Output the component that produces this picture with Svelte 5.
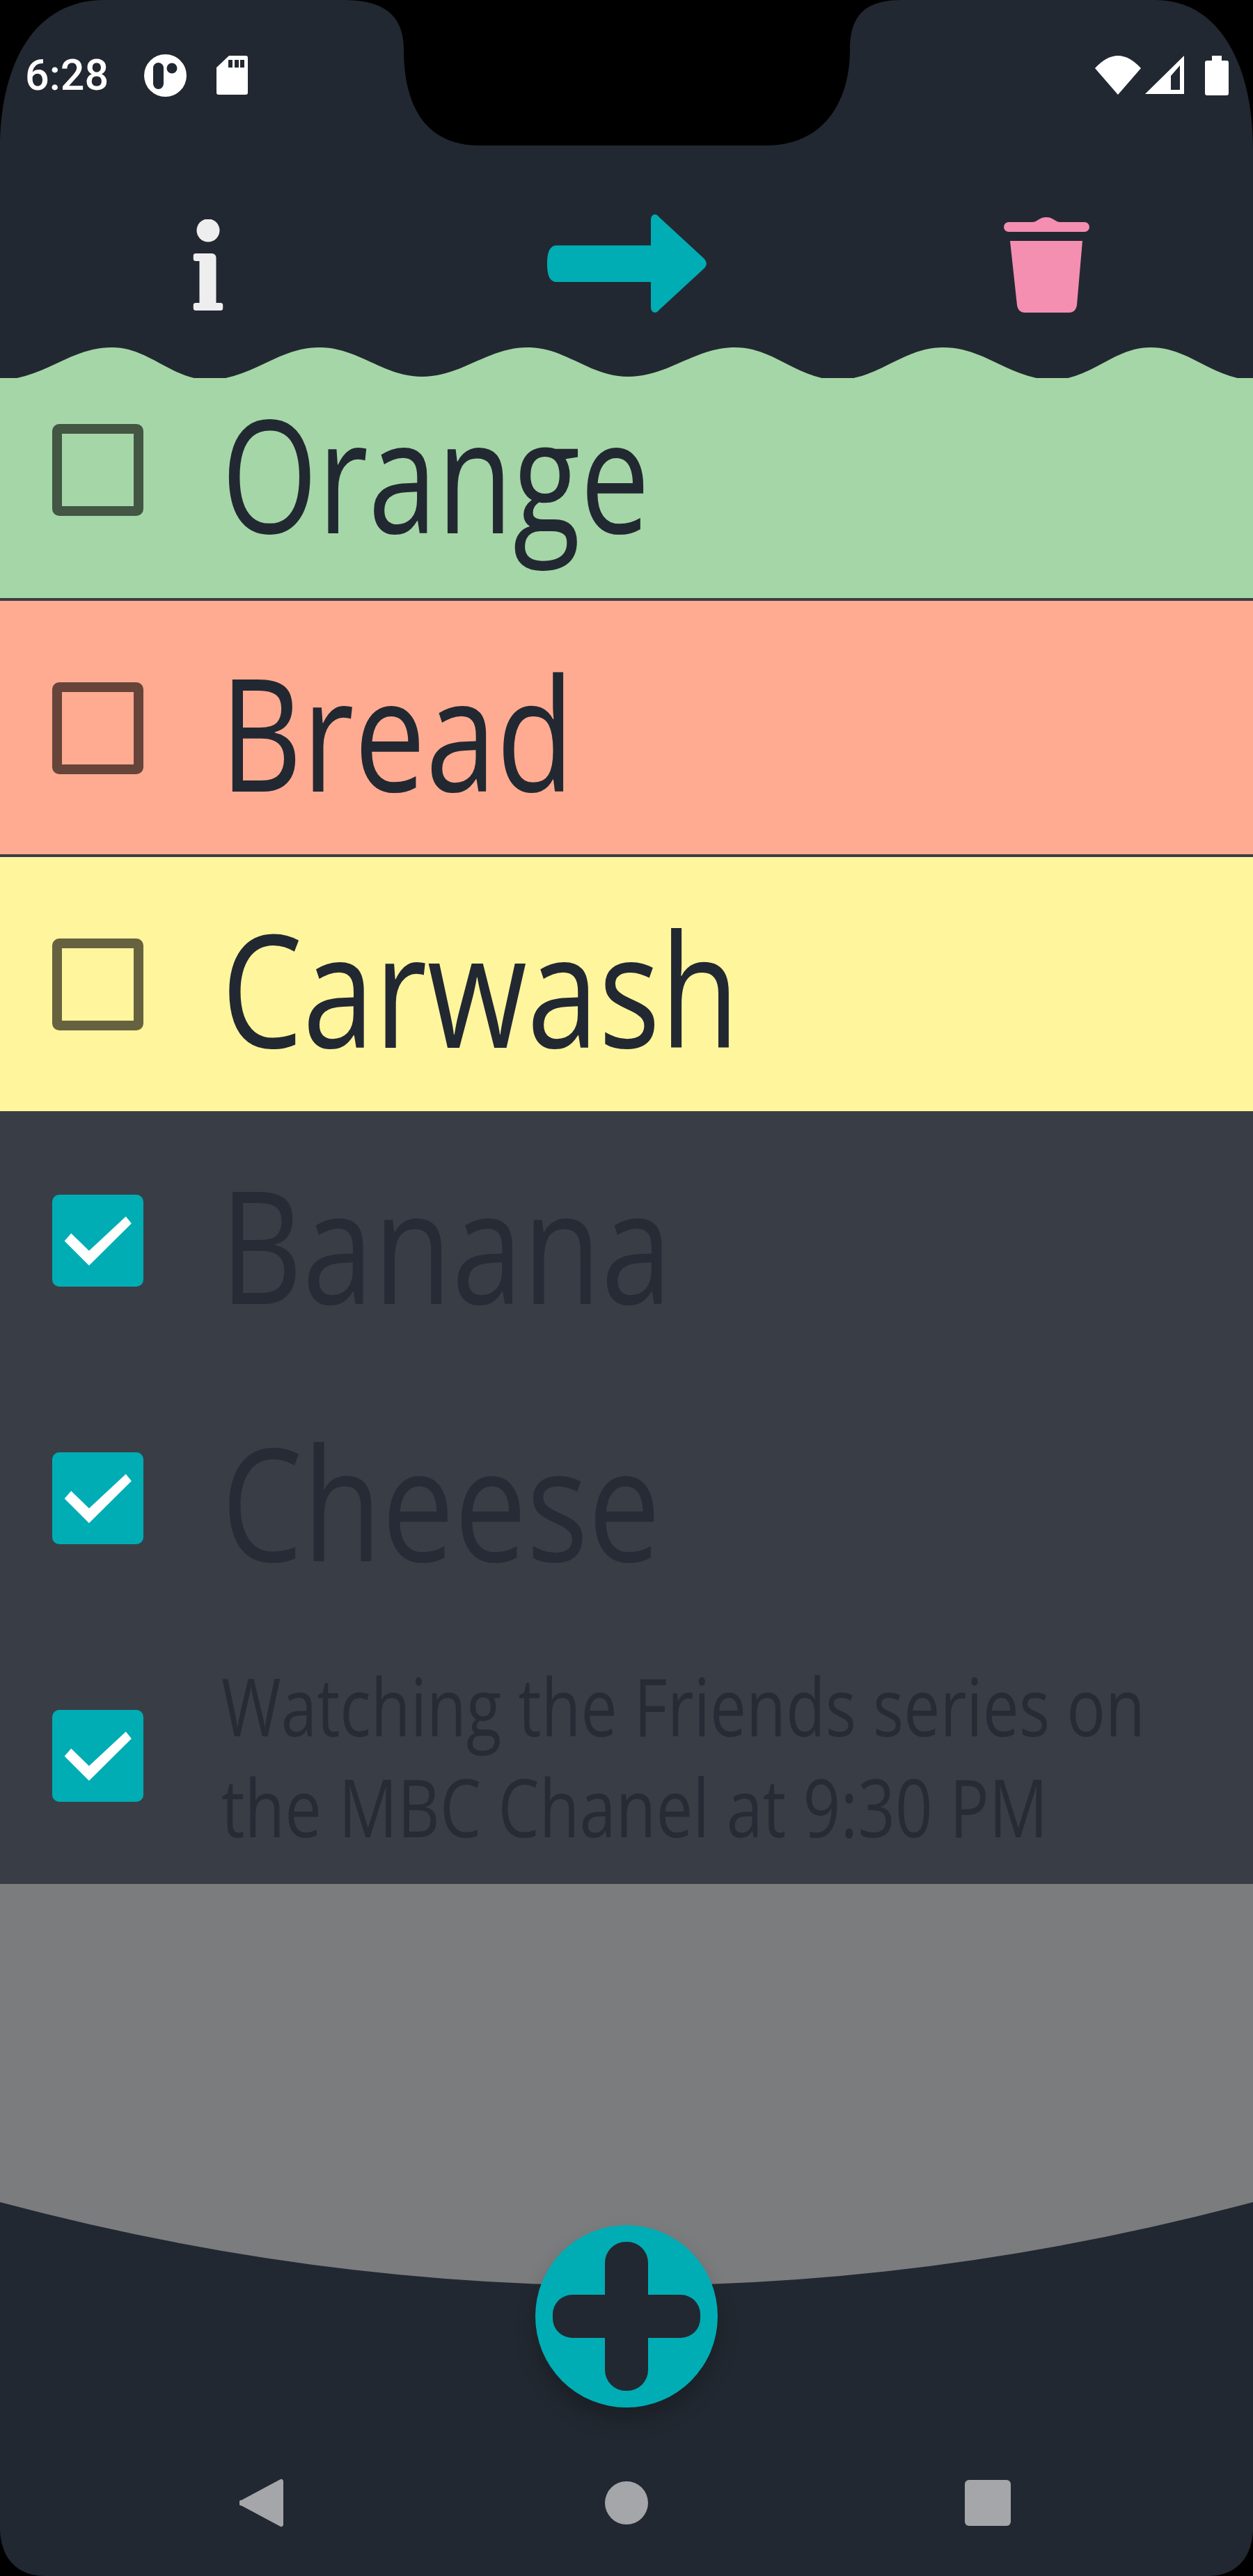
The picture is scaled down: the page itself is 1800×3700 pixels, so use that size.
<script>
  // sx and dx fit the fallback font to the measured width of each line
  const items = [
    { lines: [{ text: 'Orange', sx: 0.787 }], color: 'green', done: false, dx: 0 },
    { lines: [{ text: 'Bread', sx: 0.809 }], color: 'coral', done: false, line: true, dx: -2 },
    { lines: [{ text: 'Carwash', sx: 0.82 }], color: 'yellow', done: false, line: true, dx: 0 },
    { lines: [{ text: 'Banana', sx: 0.812 }], done: true, dx: -2 },
    { lines: [{ text: 'Cheese', sx: 0.82 }], done: true, dx: 0 },
    {
      lines: [
        { text: 'Watching the Friends series on', sx: 0.8 },
        { text: 'the MBC Chanel at 9:30 PM', sx: 0.811 },
      ],
      done: true,
      small: true,
      dx: 0,
    },
  ]

  // wave extremes along the bottom of the header: [x, y]
  const waveStops = [
    [0, 545.5], [161, 499], [300, 545.5], [459, 499], [606, 541], [758, 499], [902, 541],
    [1056, 499], [1203, 545.5], [1355, 499], [1513, 545.5], [1653, 499], [1800, 545.5],
  ]

  const buildWave = () => {
    let d = `M0 490 L${waveStops[0][0]} ${waveStops[0][1]}`
    for (let i = 1; i < waveStops.length; i++) {
      const [x0, y0] = waveStops[i - 1]
      const [x1, y1] = waveStops[i]
      const k = (x1 - x0) * 0.38
      d += ` C${x0 + k} ${y0} ${x1 - k} ${y1} ${x1} ${y1}`
    }
    return d + ' L1800 490 Z'
  }

  const wavePath = buildWave()
</script>

<div class="screen">
  <header class="header">
    <div class="status">
      <div class="status__left">
        <span class="time">6:28</span>
        <svg class="ic-circle" viewBox="205 77 61 61" aria-hidden="true">
          <circle cx="235.5" cy="107.5" r="30.5" fill="#fff" />
          <rect x="218" y="89" width="15" height="38" rx="7.5" fill="#222831" />
          <circle cx="245" cy="97" r="7.5" fill="#222831" />
        </svg>
        <svg class="ic-sd" viewBox="309 80 45 56" aria-hidden="true">
          <path d="M327 80H351a3 3 0 0 1 3 3V133a3 3 0 0 1-3 3H312a3 3 0 0 1-3-3V97Z" fill="#fff" />
          <path d="M326 86h6v11h-6zM335 86h6v11h-6zM343 86h6v11h-6z" fill="#222831" />
        </svg>
      </div>
      <div class="status__right">
        <svg class="ic-wifi" viewBox="1573 79 66 56" aria-hidden="true">
          <path d="M1606 135L1573 97Q1606 61 1639 97Z" fill="#fff" />
        </svg>
        <svg class="ic-signal" viewBox="1645 80 56 56" aria-hidden="true">
          <path d="M1645 135L1701 80V135Z" fill="#fff" />
          <path d="M1682 109L1695 94V129H1682Z" fill="#222831" />
        </svg>
        <svg class="ic-battery" viewBox="1731 79 34 57" aria-hidden="true">
          <path d="M1741 79H1755V86H1762a3 3 0 0 1 3 3V133a3 3 0 0 1-3 3H1734a3 3 0 0 1-3-3V89a3 3 0 0 1 3-3H1741Z" fill="#fff" />
        </svg>
      </div>
    </div>

    <div class="toolbar">
      <div class="toolbar__cell">
        <svg class="ic-info" viewBox="277 315 43 131" aria-label="Info">
          <ellipse cx="298.5" cy="331" rx="16.5" ry="16.5" />
          <path d="M281 364H304a6 6 0 0 1 6 6V435H316a4 4 0 0 1 4 4V442a4 4 0 0 1-4 4H281a4 4 0 0 1-4-4V439a4 4 0 0 1 4-4H286V375H281a4 4 0 0 1-4-4V368a4 4 0 0 1 4-4Z" />
        </svg>
      </div>
      <div class="toolbar__cell">
        <svg class="ic-arrow" viewBox="785 308 229 141" aria-label="Next">
          <path d="M799 352.5H934V316C934 308 941 305 946 312L1010 371C1015 376 1015 381 1010 386L946 445C941 452 934 449 934 441V405H799C790 405 785 398 785 379C785 360 790 352.5 799 352.5Z" />
        </svg>
      </div>
      <div class="toolbar__cell">
        <svg class="ic-trash" viewBox="1442 312 123 137" aria-label="Delete">
          <path d="M1449 319H1483C1490 319 1493 312 1503 312C1513 312 1516 319 1523 319H1558a7 7 0 0 1 7 7a7 7 0 0 1-7 7H1449a7 7 0 0 1-7-7a7 7 0 0 1 7-7Z" />
          <path d="M1451 346H1555L1547 438C1546 445 1542 449 1536 449H1472C1466 449 1462 445 1461 438Z" />
        </svg>
      </div>
    </div>
  </header>

  <ul class="list">
    {#each items as item, i}
      <li class="row {item.color ?? ''}" class:row--done={item.done} class:row--line={item.line}>
        {#if i === 0}
          <svg class="wave" viewBox="0 490 1800 53" preserveAspectRatio="none" aria-hidden="true">
            <path d={wavePath} fill="#222831" />
          </svg>
        {/if}
        {#if item.done}
          <span class="box box--on">
            <svg viewBox="0 0 130 131" aria-hidden="true">
              <path d="M17.5 66L52.5 101L113 41L105 31L52.5 80L27 55Z" fill="#fff" />
            </svg>
          </span>
        {:else}
          <span class="box"></span>
        {/if}
        <span class="label" class:label--small={item.small}>
          {#each item.lines as line}
            <span class="label__line" style="transform: translateX({item.dx}px) scaleX({line.sx})">{line.text}</span>
          {/each}
        </span>
      </li>
    {/each}
  </ul>

  <footer class="tail">
    <svg class="tail__arc" viewBox="0 0 1800 540" aria-hidden="true">
      <path d="M0 3Q900 243 1800 3V540H0Z" fill="#222831" />
    </svg>
    <button class="fab" type="button" aria-label="Add">
      <svg viewBox="0 0 212 214" aria-hidden="true">
        <rect x="75" y="0" width="62" height="214" rx="30" />
        <rect x="0" y="76" width="212" height="62" rx="28" />
      </svg>
    </button>
    <nav class="nav">
      <svg class="nav__back" viewBox="344 3560 63 70" aria-hidden="true">
        <path d="M403 3561a3 3 0 0 1 4 3V3626a3 3 0 0 1-4 3L347 3599a4 4 0 0 1 0-8Z" />
      </svg>
      <span class="nav__home"></span>
      <span class="nav__recent"></span>
    </nav>
  </footer>

  <svg class="mask" viewBox="0 0 1800 3700" aria-hidden="true">
    <path d="M0 0H150C50 0 0 90 0 215Z" />
    <path d="M1800 0H1660C1750 0 1800 90 1800 215Z" />
    <path d="M494 0C555 0 580 25 580 71C580 150 610 209 689 209H1101C1180 209 1221 150 1221 71C1221 25 1240 0 1295 0Z" />
    <path d="M0 3635C2 3675 25 3700 65 3700H0Z" />
    <path d="M1800 3635C1798 3675 1775 3700 1735 3700H1800Z" />
  </svg>
</div>

<style>
  :global(body) {
    margin: 0;
    background: #222831;
  }

  .screen {
    position: relative;
    display: flex;
    flex-direction: column;
    width: 1800px;
    height: 3700px;
    overflow: hidden;
    background: #222831;
    font-family: 'Open Sans', sans-serif;
  }

  .header {
    height: 490px;
    flex-shrink: 0;
  }

  .status {
    display: flex;
    align-items: center;
    justify-content: space-between;
    height: 216px;
    padding: 0 35px 0 36px;
  }

  .status__left,
  .status__right {
    display: flex;
    align-items: center;
  }

  .time {
    font-family: Roboto, sans-serif;
    font-size: 61px;
    font-weight: 500;
    line-height: 60px;
    color: #fff;
  }

  .ic-circle {
    width: 61px;
    height: 61px;
    margin-left: 51px;
  }

  .ic-sd {
    width: 45px;
    height: 56px;
    margin-left: 43px;
  }

  .ic-wifi {
    width: 66px;
    height: 56px;
  }

  .ic-signal {
    width: 56px;
    height: 56px;
    margin-left: 6px;
  }

  .ic-battery {
    width: 34px;
    height: 57px;
    margin-left: 30px;
  }

  .toolbar {
    display: flex;
    align-items: center;
    height: 141px;
    margin-top: 92px;
  }

  .toolbar__cell {
    flex: 1;
    display: flex;
    justify-content: center;
  }

  .ic-info {
    width: 43px;
    height: 131px;
    fill: #eeeeee;
    transform: translate(-1.5px, 2px);
  }

  .ic-arrow {
    width: 229px;
    height: 141px;
    fill: #00adb5;
  }

  .ic-trash {
    width: 123px;
    height: 137px;
    fill: #f48fb1;
    transform: translate(3px, 2px);
  }

  .list {
    margin: 0;
    padding: 0;
    list-style: none;
    flex-shrink: 0;
  }

  .row {
    position: relative;
    display: flex;
    align-items: center;
    box-sizing: border-box;
    height: 368.5px;
    padding: 2px 0 0 75px;
    color: #222831;
  }

  .row--line {
    border-top: 4px solid #393e46;
  }

  .row--done {
    height: 370px;
    background: #393e46;
    color: #262b35;
  }

  .green {
    background: #a5d6a7;
  }

  .coral {
    background: #ffab91;
  }

  .yellow {
    background: #fff59d;
  }

  .wave {
    position: absolute;
    top: 0;
    left: 0;
    width: 1800px;
    height: 53px;
  }

  .box {
    flex-shrink: 0;
    box-sizing: border-box;
    width: 131px;
    height: 132px;
    border: 14px solid rgba(0, 0, 0, 0.6);
    border-radius: 10px;
  }

  .box--on {
    border: 0;
    background: #00adb5;
  }

  .box--on svg {
    display: block;
    width: 100%;
    height: 100%;
  }

  .label {
    position: relative;
    top: 3px;
    margin-left: 112px;
    font-size: 226px;
    line-height: 1;
    font-weight: 500;
  }

  .label__line {
    display: block;
    width: max-content;
    transform-origin: left center;
  }

  .label--small {
    top: 0;
    font-size: 116px;
    line-height: 145px;
    font-weight: 400;
  }

  .tail {
    position: relative;
    flex: 1;
    display: flex;
    flex-direction: column;
    justify-content: flex-end;
    background: #7b7c7e;
  }

  .tail__arc {
    position: absolute;
    left: 0;
    bottom: 0;
    width: 1800px;
    height: 540px;
  }

  .fab {
    position: absolute;
    left: 769px;
    bottom: 242px;
    display: flex;
    align-items: center;
    justify-content: center;
    width: 262px;
    height: 262px;
    padding: 0;
    border: 0;
    border-radius: 50%;
    background: #00adb5;
    box-shadow: 0 18px 30px rgba(0, 0, 0, 0.22);
  }

  .fab svg {
    width: 212px;
    height: 214px;
    fill: #222831;
  }

  .nav {
    position: relative;
    display: flex;
    align-items: center;
    gap: 462px;
    height: 210px;
    padding-left: 344px;
  }

  .nav__back {
    width: 63px;
    height: 70px;
    fill: #a4a6aa;
  }

  .nav__home {
    width: 62px;
    height: 62px;
    border-radius: 50%;
    background: #a4a6aa;
  }

  .nav__recent {
    width: 66px;
    height: 66px;
    margin-left: -7px;
    border-radius: 6px;
    background: #a4a6aa;
  }

  .mask {
    position: absolute;
    inset: 0;
    width: 1800px;
    height: 3700px;
    fill: #000;
    pointer-events: none;
  }
</style>
